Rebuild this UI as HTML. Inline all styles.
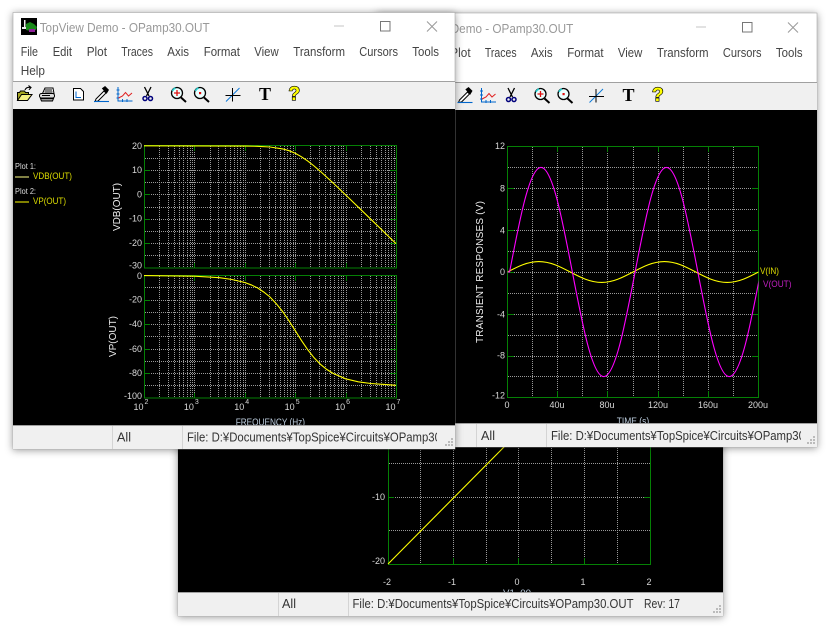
<!DOCTYPE html>
<html><head><meta charset="utf-8"><title>TopView Demo</title>
<style>
html,body{margin:0;padding:0;background:#fff;width:830px;height:628px;overflow:hidden}
svg{display:block}
text{font-family:"Liberation Sans",sans-serif}
.m{font-size:12.5px;fill:#444}
.s{font-size:12.5px;fill:#333}
.l{font-size:9px;fill:#d8d8d8}
.e{text-anchor:end}
.c{text-anchor:middle}
.sup{font-size:7px;fill:#d8d8d8}
.g{fill:none;stroke:#999;stroke-width:1;stroke-dasharray:1 1;shape-rendering:crispEdges}
.f{fill:none;stroke:#058005;stroke-width:1;shape-rendering:crispEdges}
.t{fill:none;stroke:#058005;stroke-width:1.4;shape-rendering:crispEdges}
.w{filter:drop-shadow(0 1px 4px rgba(0,0,0,.4))}
</style></head>
<body>
<svg width="830" height="628" viewBox="0 0 830 628" xmlns="http://www.w3.org/2000/svg">
<defs>
<clipPath id="c3"><rect x="178" y="300" width="545" height="292"/></clipPath>
<clipPath id="s1"><rect x="183" y="425" width="254" height="24"/></clipPath>
<clipPath id="s2"><rect x="547" y="423" width="254" height="24"/></clipPath>
<clipPath id="p2"><rect x="507.5" y="146" width="251" height="252"/></clipPath>
<path id="lg" d="M159.5 0V122M168.5 0V122M174.5 0V122M179.5 0V122M183.5 0V122M187.5 0V122M190.5 0V122M192.5 0V122M194.5 0V122M210.5 0V122M218.5 0V122M225.5 0V122M230.5 0V122M234.5 0V122M237.5 0V122M240.5 0V122M243.5 0V122M245.5 0V122M260.5 0V122M269.5 0V122M275.5 0V122M280.5 0V122M284.5 0V122M287.5 0V122M290.5 0V122M293.5 0V122M295.5 0V122M310.5 0V122M319.5 0V122M325.5 0V122M330.5 0V122M334.5 0V122M338.5 0V122M341.5 0V122M343.5 0V122M346.5 0V122M361.5 0V122M370.5 0V122M376.5 0V122M381.5 0V122M385.5 0V122M388.5 0V122M391.5 0V122M394.5 0V122"/>
<g id="icons">
  <path d="M17.5 100.5V92.5h2l1-1.5h4l1 1.5h3v2" fill="#a6a620" stroke="#000"/>
  <path d="M17.5 100.5l4-6h10.5l-4.5 6z" fill="#f4f080" stroke="#000"/>
  <path d="M25 90c1-2.500 3-3 5.500-2.500M28.500 85.500l2.500 2-2 2.300" fill="none" stroke="#000" stroke-width="1.1"/>
  <path d="M42.500 93.500l2.500-5.500h8l1 5.500z" fill="#fff" stroke="#000"/>
  <path d="M45 90h7M44.500 92h8" stroke="#000" stroke-width="1"/>
  <rect x="39.500" y="93.500" width="15" height="4.500" rx="2" fill="#ddd" stroke="#000"/>
  <path d="M40.500 98.500h13l-1 2.500h-11z" fill="#999" stroke="#000"/>
  <path d="M42 95.500h8" stroke="#000"/>
  <path d="M73.500 88.500h7l3 3v8.500h-10z" fill="#fff" stroke="#000"/>
  <path d="M76 91.500v6h5" fill="none" stroke="#06c" stroke-width="1"/>
  <path d="M96 99l8-8 2 2-8 8-3 .5z" fill="#fff" stroke="#000"/>
  <path d="M103 88.500l2-1.500 3 3-1.500 2.500z" fill="#000" stroke="#000" stroke-width="1.600"/>
  <path d="M94 101.500h15" stroke="#06c" stroke-width="1.100"/>
  <path d="M118 87v14h14.500M116.500 90h3M116.500 94h3M116.500 98h3M122.500 99v3M127 99v3" fill="none" stroke="#06c" stroke-width="1"/>
  <path d="M118.500 98l4-2 3-3.500 3 3.500 3.500-3" fill="none" stroke="#e02020" stroke-width="1"/>
  <path d="M144.500 87l4.500 9M151 87l-4.500 9" stroke="#000" stroke-width="1.300" fill="none"/>
  <circle cx="145" cy="98.500" r="2" fill="none" stroke="#00007c" stroke-width="1.500"/>
  <circle cx="150.500" cy="98.500" r="2" fill="none" stroke="#00007c" stroke-width="1.500"/>
  <circle cx="177" cy="93" r="5.500" fill="#eaffff" stroke="#000" stroke-width="1.300"/>
  <path d="M172.500 91a5 5 0 0 1 3-3" stroke="#2cc" stroke-width="1.500" fill="none"/>
  <path d="M174 93h6M177 90v6" stroke="#e01010" stroke-width="1.300"/>
  <path d="M181 97.500l5 4.500" stroke="#000" stroke-width="2"/>
  <circle cx="200" cy="93" r="5.500" fill="#eaffff" stroke="#000" stroke-width="1.300"/>
  <path d="M195.500 91a5 5 0 0 1 3-3" stroke="#2cc" stroke-width="1.500" fill="none"/>
  <rect x="199" y="92" width="2.200" height="2.200" fill="#e01010"/>
  <path d="M204 97.500l5 4.500" stroke="#000" stroke-width="2"/>
  <path d="M226 101.500L239.500 88" stroke="#0a78d8" stroke-width="1"/>
  <path d="M225.500 95.500h15M232.500 88v13.500" stroke="#000" stroke-width="1"/>
</g>
</defs>

<rect width="830" height="628" fill="#fff"/>

<!-- WINDOW 3 -->
<g class="w">
<rect x="178" y="300" width="545" height="316" fill="#f0f0f0" stroke="#a8a8a8" stroke-width=".6"/>
<rect x="178" y="300" width="545" height="292" fill="#000"/>
</g>
<path class="g" d="M420.500 440V564M453.500 440V564M486.500 440V564M518.500 440V564M551.500 440V564M584.500 440V564M617.500 440V564M389 463.500H650M389 497.500H650M389 530.500H650"/>
<path class="f" d="M388.500 440V564.500H650.500V440"/>
<path class="t" d="M388 497.500h6M644 497.500h7M453.500 558v6M518.500 558v6M584.500 558v6"/>
<path d="M388 564L505 446" stroke="#ff0" stroke-width="1.100" fill="none"/>
<text class="l e" x="385" y="500">-10</text>
<text class="l e" x="385" y="564">-20</text>
<text class="l c" x="387" y="585">-2</text>
<text class="l c" x="452" y="585">-1</text>
<text class="l c" x="517" y="585">0</text>
<text class="l c" x="583" y="585">1</text>
<text class="l c" x="649" y="585">2</text>
<g clip-path="url(#c3)"><text x="503" y="596" font-size="9.500" fill="#bcd" textLength="28" lengthAdjust="spacingAndGlyphs">V1_00</text></g>
<rect x="178" y="592" width="545" height="24" fill="#f0f0f0"/>
<path d="M178 592.500H723" stroke="#a0a0a0"/>
<path d="M278.500 593V616M348.500 593V616" stroke="#d4d4d4"/>
<text class="s" x="282" y="608" textLength="14" lengthAdjust="spacingAndGlyphs">All</text>
<text class="s" x="352.500" y="608" textLength="281" lengthAdjust="spacingAndGlyphs">File: D:¥Documents¥TopSpice¥Circuits¥OPamp30.OUT</text>
<text class="s" x="644" y="608" textLength="36" lengthAdjust="spacingAndGlyphs">Rev: 17</text>
<path d="M719 605h2v2h-2zM716 608h2v2h-2zM719 608h2v2h-2zM713 611h2v2h-2zM716 611h2v2h-2zM719 611h2v2h-2z" fill="#bbb"/>

<!-- WINDOW 2 -->
<g class="w">
<rect x="376.500" y="13" width="440.500" height="434" fill="#fff" stroke="#a8a8a8" stroke-width=".6"/>
</g>
<text x="403.300" y="33" font-size="12.500" fill="#999" textLength="170" lengthAdjust="spacingAndGlyphs">TopView Demo - OPamp30.OUT</text>
<path d="M696 27h10" stroke="#c4c4c4" stroke-width="1"/>
<rect x="742.500" y="22.500" width="9.500" height="9.500" fill="none" stroke="#777"/>
<path d="M788 22.500l10 10M798 22.500l-10 10" stroke="#999"/>
<text class="m" x="450.300" y="57" textLength="20.300" lengthAdjust="spacingAndGlyphs">Plot</text>
<text class="m" x="484.900" y="57" textLength="31.700" lengthAdjust="spacingAndGlyphs">Traces</text>
<text class="m" x="530.900" y="57" textLength="21.700" lengthAdjust="spacingAndGlyphs">Axis</text>
<text class="m" x="567.300" y="57" textLength="36.300" lengthAdjust="spacingAndGlyphs">Format</text>
<text class="m" x="617.900" y="57" textLength="24.400" lengthAdjust="spacingAndGlyphs">View</text>
<text class="m" x="656.900" y="57" textLength="51.700" lengthAdjust="spacingAndGlyphs">Transform</text>
<text class="m" x="722.900" y="57" textLength="38.700" lengthAdjust="spacingAndGlyphs">Cursors</text>
<text class="m" x="775.900" y="57" textLength="26.700" lengthAdjust="spacingAndGlyphs">Tools</text>
<rect x="377" y="83" width="440" height="27" fill="#f0f0f0"/>
<path d="M377 82.500H817" stroke="#a0a0a0"/>
<g transform="translate(363.500,1)"><use href="#icons"/>
<text x="259" y="100" font-weight="700" font-size="18" fill="#000" style="font-family:'Liberation Serif',serif">T</text>
<text x="288.500" y="100" font-size="19" font-weight="700" fill="#ff0" stroke="#000" stroke-width="1.300" paint-order="stroke">?</text></g>
<rect x="377" y="110" width="440" height="313" fill="#000"/>
<path class="g" d="M532.500 147V397M557.500 147V397M582.500 147V397M607.500 147V397M633.500 147V397M658.500 147V397M683.500 147V397M708.500 147V397M733.500 147V397M508 167.500H758M508 188.500H758M508 209.500H758M508 230.500H758M508 251.500H758M508 272.500H758M508 293.500H758M508 314.500H758M508 335.500H758M508 356.500H758M508 376.500H758"/>
<rect class="f" x="507.500" y="146.500" width="251" height="251"/>
<path class="t" d="M508 188.500h6M508 230.500h6M508 272.500h6M508 314.500h6M508 356.500h6M752 188.500h6M752 230.500h6M752 272.500h6M752 314.500h6M752 356.500h6M557.500 147v5M607.500 147v5M658.500 147v5M708.500 147v5M557.500 391v6M607.500 391v6M658.500 391v6M708.500 391v6"/>
<g clip-path="url(#p2)" fill="none" stroke-width="1.100">
<path stroke="#ff0" d="M507.500 272c10.230 -5.360 20.020 -10.460 31.375 -10.460c11.350 0 21.140 5.100 31.375 10.460c10.230 5.360 20.020 10.460 31.375 10.460c11.350 0 21.140 -5.100 31.375 -10.460c10.230 -5.360 20.020 -10.460 31.375 -10.460c11.350 0 21.140 5.100 31.375 10.460c10.230 5.360 20.020 10.460 31.375 10.460c11.350 0 21.140 -5.100 31.375 -10.460"/>
<path stroke="#f0f" d="M507.500 272H509.600c10.230 -53.590 20.020 -104.600 31.375 -104.600c11.350 0 21.140 51.010 31.375 104.600c10.230 53.590 20.020 104.600 31.375 104.600c11.350 0 21.140 -51.010 31.375 -104.600c10.230 -53.590 20.020 -104.600 31.375 -104.600c11.350 0 21.140 51.010 31.375 104.600c10.230 53.590 20.020 104.600 31.375 104.600c11.350 0 21.140 -51.010 31.375 -104.600"/>
</g>
<text class="l e" x="505" y="149">12</text>
<text class="l e" x="505" y="191.500">8</text>
<text class="l e" x="505" y="233.500">4</text>
<text class="l e" x="505" y="275">0</text>
<text class="l e" x="505" y="317.500">-4</text>
<text class="l e" x="505" y="358.500">-8</text>
<text class="l e" x="505" y="398.500">-12</text>
<text class="l c" x="507" y="408">0</text>
<text class="l c" x="557" y="408">40u</text>
<text class="l c" x="607" y="408">80u</text>
<text class="l c" x="658" y="408">120u</text>
<text class="l c" x="708" y="408">160u</text>
<text class="l c" x="758" y="408">200u</text>
<text transform="translate(483,343) rotate(-90)" font-size="10" fill="#eee" textLength="142" lengthAdjust="spacing">TRANSIENT RESPONSES  (V)</text>
<text x="616.700" y="424.500" font-size="10.500" fill="#bcd" textLength="32.500" lengthAdjust="spacingAndGlyphs">TIME  (s)</text>
<text x="760" y="274" font-size="9" fill="#dd0" textLength="19" lengthAdjust="spacingAndGlyphs">V(IN)</text>
<text x="763" y="287" font-size="9" fill="#c020c0" textLength="28.500" lengthAdjust="spacingAndGlyphs">V(OUT)</text>
<rect x="377" y="423" width="440" height="24" fill="#f0f0f0"/>
<path d="M377 423.500H817" stroke="#a0a0a0"/>
<path d="M476.500 424V447M546.500 424V447" stroke="#d4d4d4"/>
<text class="s" x="481" y="440" textLength="14" lengthAdjust="spacingAndGlyphs">All</text>
<g clip-path="url(#s2)"><text class="s" x="551" y="440" textLength="281" lengthAdjust="spacingAndGlyphs">File: D:¥Documents¥TopSpice¥Circuits¥OPamp30.OUT</text></g>
<path d="M813 436h2v2h-2zM810 439h2v2h-2zM813 439h2v2h-2zM807 442h2v2h-2zM810 442h2v2h-2zM813 442h2v2h-2z" fill="#bbb"/>

<!-- WINDOW 1 -->
<g class="w">
<rect x="13" y="12.500" width="442" height="436.500" fill="#fff" stroke="#a8a8a8" stroke-width=".6"/>
</g>
<rect x="21" y="18" width="16" height="17" fill="#000"/>
<path d="M26 24l4-2 4 2 3 3-1 3-5 1-5-1z" fill="#1a8a1a"/>
<rect x="29" y="29" width="6" height="3" fill="#90209a"/>
<rect x="24" y="20" width="1.500" height="8" fill="#eee"/>
<rect x="22" y="27" width="4" height="2" fill="#eee"/>
<text x="39.700" y="32" font-size="12.500" fill="#999" textLength="170" lengthAdjust="spacingAndGlyphs">TopView Demo - OPamp30.OUT</text>
<path d="M334 26h10" stroke="#c4c4c4" stroke-width="1"/>
<rect x="380.500" y="21.500" width="9.500" height="9.500" fill="none" stroke="#777"/>
<path d="M427 21.500l10 10M437 21.500l-10 10" stroke="#999"/>
<text class="m" x="20.700" y="56" textLength="17.300" lengthAdjust="spacingAndGlyphs">File</text>
<text class="m" x="52.700" y="56" textLength="19.300" lengthAdjust="spacingAndGlyphs">Edit</text>
<text class="m" x="86.700" y="56" textLength="20.300" lengthAdjust="spacingAndGlyphs">Plot</text>
<text class="m" x="121.300" y="56" textLength="31.700" lengthAdjust="spacingAndGlyphs">Traces</text>
<text class="m" x="167.300" y="56" textLength="21.700" lengthAdjust="spacingAndGlyphs">Axis</text>
<text class="m" x="203.700" y="56" textLength="36.300" lengthAdjust="spacingAndGlyphs">Format</text>
<text class="m" x="254.300" y="56" textLength="24.400" lengthAdjust="spacingAndGlyphs">View</text>
<text class="m" x="293.300" y="56" textLength="51.700" lengthAdjust="spacingAndGlyphs">Transform</text>
<text class="m" x="359.300" y="56" textLength="38.700" lengthAdjust="spacingAndGlyphs">Cursors</text>
<text class="m" x="412.300" y="56" textLength="26.700" lengthAdjust="spacingAndGlyphs">Tools</text>
<text class="m" x="20.700" y="75" textLength="24.300" lengthAdjust="spacingAndGlyphs">Help</text>
<rect x="13" y="82" width="442" height="27" fill="#f0f0f0"/>
<path d="M13 81.500H455" stroke="#a0a0a0"/>
<use href="#icons"/>
<text x="259" y="100" font-weight="700" font-size="18" fill="#000" style="font-family:'Liberation Serif',serif">T</text>
<text x="288.500" y="100" font-size="19" font-weight="700" fill="#ff0" stroke="#000" stroke-width="1.300" paint-order="stroke">?</text>
<rect x="13" y="109" width="442" height="316" fill="#000"/>

<!-- legend -->
<text x="15" y="169" font-size="8.500" fill="#ddd" textLength="21" lengthAdjust="spacingAndGlyphs">Plot 1:</text>
<path d="M15 177h14" stroke="#ff8" stroke-width="1"/>
<text x="33" y="179" font-size="9" fill="#dd0" textLength="39" lengthAdjust="spacingAndGlyphs">VDB(OUT)</text>
<text x="15" y="194" font-size="8.500" fill="#ddd" textLength="21" lengthAdjust="spacingAndGlyphs">Plot 2:</text>
<path d="M15 202h14" stroke="#ff0" stroke-width="1"/>
<text x="33" y="204" font-size="9" fill="#dd0" textLength="33" lengthAdjust="spacingAndGlyphs">VP(OUT)</text>

<!-- plot 1 -->
<use href="#lg" class="g" y="146"/>
<path class="g" d="M145 158.500H396M145 170.500H396M145 182.500H396M145 194.500H396M145 207.500H396M145 219.500H396M145 231.500H396M145 243.500H396M145 255.500H396"/>
<rect class="f" x="144.500" y="145.500" width="252" height="122.500"/>
<path class="t" d="M145 170.500h5M145 194.500h5M145 219.500h5M145 243.500h5M390 170.500h6M390 194.500h6M390 219.500h6M390 243.500h6M194.500 146v5M245.500 146v5M295.500 146v5M346.500 146v5M194.500 263v5M245.500 263v5M295.500 263v5M346.500 263v5"/>
<polyline fill="none" stroke="#ff0" stroke-width="1.100" points="144,145.800 244.800,146.100 257.400,146.300 270,147 282.600,148.900 289,150.700 295.200,153.300 301.500,156.800 307.800,161.100 314.100,166 320.400,171.400 326.700,177.100 333,182.900 345.600,194.900 370.800,219.200 396,243.600"/>
<text class="l e" x="142" y="149">20</text>
<text class="l e" x="142" y="173">10</text>
<text class="l e" x="142" y="197.500">0</text>
<text class="l e" x="142" y="221.500">-10</text>
<text class="l e" x="142" y="246">-20</text>
<text class="l e" x="142" y="268.500">-30</text>
<text transform="translate(120,231) rotate(-90)" font-size="10.500" fill="#eee" textLength="48" lengthAdjust="spacingAndGlyphs">VDB(OUT)</text>

<!-- plot 2 -->
<use href="#lg" class="g" y="276"/>
<path class="g" d="M145 287.500H396M145 300.500H396M145 312.500H396M145 324.500H396M145 336.500H396M145 349.500H396M145 361.500H396M145 373.500H396M145 385.500H396"/>
<rect class="f" x="144.500" y="275.500" width="252" height="122.500"/>
<path class="t" d="M145 300.500h5M145 324.500h5M145 349.500h5M145 373.500h5M390 300.500h6M390 324.500h6M390 349.500h6M390 373.500h6M194.500 276v5M245.500 276v5M295.500 276v5M346.500 276v5M194.500 393v5M245.500 393v5M295.500 393v5M346.500 393v5"/>
<polyline fill="none" stroke="#ff0" stroke-width="1.100" points="144,275.600 194.400,276.200 219.600,277.700 232,279.500 244.800,282.500 251,284.800 257.400,287.800 263.700,292 270,297 276.300,303.700 282.600,311.500 288.900,320.700 295.200,330.600 301.500,340.600 307.800,349.800 314.100,357.800 320.400,364.300 326.700,369.400 333,373.400 345.600,378.800 358.200,381.800 370.800,383.500 396,385.300"/>
<text class="l e" x="142" y="279">0</text>
<text class="l e" x="142" y="302.500">-20</text>
<text class="l e" x="142" y="327">-40</text>
<text class="l e" x="142" y="352">-60</text>
<text class="l e" x="142" y="376">-80</text>
<text class="l e" x="142" y="399">-100</text>
<text transform="translate(116,357) rotate(-90)" font-size="10.500" fill="#eee" textLength="41" lengthAdjust="spacingAndGlyphs">VP(OUT)</text>

<text class="l e" x="143.500" y="410">10</text><text class="sup" x="144.500" y="404">2</text>
<text class="l e" x="193.900" y="410">10</text><text class="sup" x="194.900" y="404">3</text>
<text class="l e" x="244.300" y="410">10</text><text class="sup" x="245.300" y="404">4</text>
<text class="l e" x="294.700" y="410">10</text><text class="sup" x="295.700" y="404">5</text>
<text class="l e" x="345.100" y="410">10</text><text class="sup" x="346.100" y="404">6</text>
<text class="l e" x="395.500" y="410">10</text><text class="sup" x="396.500" y="404">7</text>
<text x="235.700" y="425.500" font-size="10.500" fill="#bcd" textLength="69.300" lengthAdjust="spacingAndGlyphs">FREQUENCY  (Hz)</text>

<rect x="13" y="425" width="442" height="24" fill="#f0f0f0"/>
<path d="M13 425.500H455" stroke="#a0a0a0"/>
<path d="M112.500 426V449M182.500 426V449" stroke="#d4d4d4"/>
<text class="s" x="117" y="441.500" textLength="14" lengthAdjust="spacingAndGlyphs">All</text>
<g clip-path="url(#s1)"><text class="s" x="187" y="441.500" textLength="281" lengthAdjust="spacingAndGlyphs">File: D:¥Documents¥TopSpice¥Circuits¥OPamp30.OUT</text></g>
<path d="M451 438h2v2h-2zM448 441h2v2h-2zM451 441h2v2h-2zM445 444h2v2h-2zM448 444h2v2h-2zM451 444h2v2h-2z" fill="#bbb"/>
</svg>
</body></html>
